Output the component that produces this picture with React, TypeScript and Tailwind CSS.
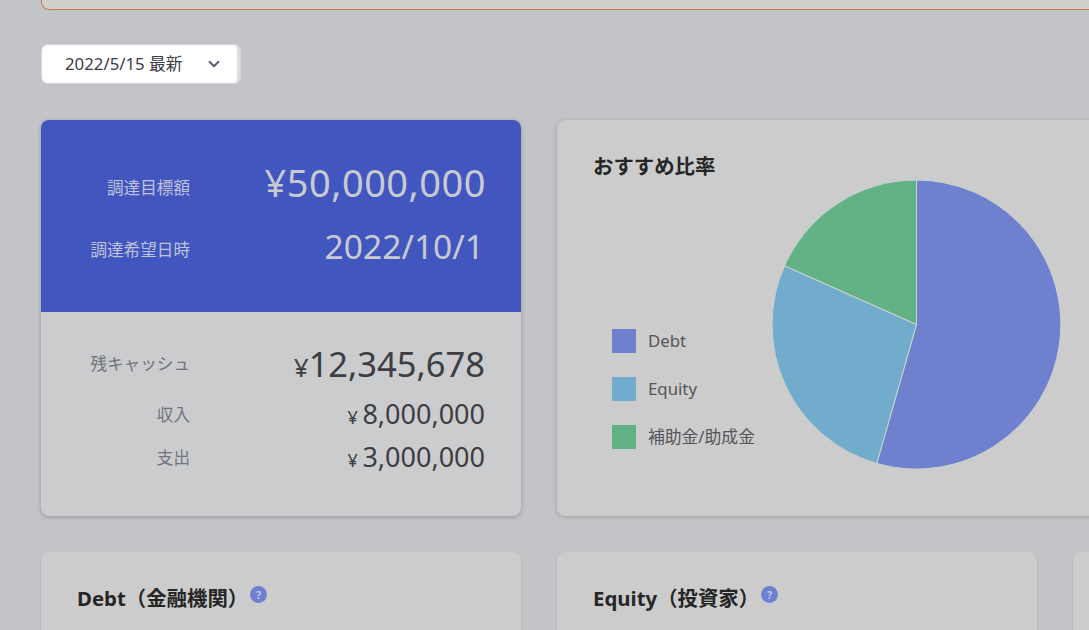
import { ChevronDown } from "lucide-react";

const sans = "font-['Noto_Sans','Noto_Sans_CJK_JP',sans-serif]";
const num = "font-['Noto_Sans','Noto_Sans_CJK_JP',sans-serif]";

const legend = [
  { label: "Debt", color: "bg-[#6f80ce]" },
  { label: "Equity", color: "bg-[#72accd]" },
  { label: "補助金/助成金", color: "bg-[#62b286]" },
];

// pie slices, coordinates in a 288 box, center 144
const slices = [
  { d: "M144 144 L144 0 A144 144 0 1 1 104.4 282.5 Z", fill: "#6f80ce" },
  { d: "M144 144 L104.4 282.5 A144 144 0 0 1 12.5 85.5 Z", fill: "#72accd" },
  { d: "M144 144 L12.5 85.5 A144 144 0 0 1 144 0 Z", fill: "#62b286" },
];

function HelpDot() {
  return (
    <span className="mt-[-7px] ml-[2px] flex h-[17px] w-[17px] items-center justify-center rounded-full bg-[#6f80d2] text-[11px] leading-none font-bold text-[#c5cbe6]">
      ?
    </span>
  );
}

function SmallCard({ title }: { title?: string }) {
  return (
    <div className="h-[120px] w-[480px] shrink-0 rounded-lg bg-[#cccccc] pt-[32px] pl-[36px] shadow-sm">
      {title && (
        <div className="flex items-center">
          <h3 className="text-[20.4px] leading-[28px] font-bold text-[#262626]">{title}</h3>
          <HelpDot />
        </div>
      )}
    </div>
  );
}

export default function App() {
  return (
    <div className={`${sans} h-[630px] w-[1089px] overflow-hidden bg-[#c3c4c8] pl-[41px]`}>
      {/* top banner, cut off by the window */}
      <div className="h-[10px] w-[1100px] rounded-b-lg border-x border-b border-[#c8794a] bg-[#cfcfcc]" />

      {/* date select */}
      <div className="mt-[35px] ml-[1px] flex h-[38px] w-[198px] items-center justify-between rounded-md border-r-[3px] border-[#dcdde0] bg-white pr-[14px] pl-[23px] shadow-[0_0_0_1px_#d5d6da]">
        <span className="text-[16.8px] text-[#3b3b45]">2022/5/15 最新</span>
        <ChevronDown className="h-[18px] w-[18px] text-[#555a78]" strokeWidth={2.5} />
      </div>

      <div className="mt-[37px] flex gap-[36px]">
        {/* summary card */}
        <div className="h-[396px] w-[480px] shrink-0 overflow-hidden rounded-lg bg-[#cbcccd] shadow-[0_1px_4px_rgba(0,0,0,0.25)]">
          <div className="h-[192px] bg-[#4256c0] pt-[39px] pr-[35px] text-[#c9cad0]">
            <div className="flex h-[46px] items-center justify-between">
              <span className="w-[149px] pt-[12px] text-right text-[16.6px] text-[#bfc3d8]">調達目標額</span>
              <span className={`${num} text-[38px] tracking-[0.5px]`}>¥50,000,000</span>
            </div>
            <div className="mt-[18px] flex h-[46px] items-center justify-between">
              <span className="w-[149px] pt-[8px] text-right text-[16.6px] text-[#bfc3d8]">調達希望日時</span>
              <span className={`${num} pr-[2px] text-[33.6px]`}>2022/10/1</span>
            </div>
          </div>
          <div className="pt-[32px] pr-[36px] text-[#3d3d42]">
            <div className="flex h-[40px] items-center justify-between">
              <span className="w-[149px] text-right text-[16.6px] text-[#72727e]">残キャッシュ</span>
              <span className={`${num} text-[34.5px]`}><span className="text-[26px]">¥</span>12,345,678</span>
            </div>
            <div className="mt-[14px] flex h-[32px] items-center justify-between">
              <span className="w-[149px] pt-[2px] text-right text-[16.6px] text-[#72727e]">収入</span>
              <span className={`${num} text-[27px]`}><span className="text-[18px]">¥ </span>8,000,000</span>
            </div>
            <div className="mt-[11px] flex h-[32px] items-center justify-between">
              <span className="w-[149px] pt-[3px] text-right text-[16.6px] text-[#72727e]">支出</span>
              <span className={`${num} text-[27px]`}><span className="text-[18px]">¥ </span>3,000,000</span>
            </div>
          </div>
        </div>

        {/* recommended ratio */}
        <div className="flex h-[396px] w-[900px] shrink-0 rounded-lg bg-[#cccccc] pt-[32px] pl-[36px] shadow-[0_1px_4px_rgba(0,0,0,0.2)]">
          <div className="flex h-[297px] w-[179px] flex-col justify-between">
            <h3 className="text-[20.4px] leading-[28px] font-bold text-[#262626]">おすすめ比率</h3>
            <ul className="flex flex-col gap-[24px] pl-[19px]">
              {legend.map((item) => (
                <li key={item.label} className="flex items-center gap-[12px]">
                  <span className={`h-[24px] w-[24px] ${item.color}`} />
                  <span className="text-[16.8px] leading-[24px] text-[#55555a]">{item.label}</span>
                </li>
              ))}
            </ul>
          </div>
          <svg viewBox="0 0 288 288" className="mt-[28px] h-[289px] w-[289px]">
            {slices.map((s) => (
              <path key={s.fill} d={s.d} fill={s.fill} stroke="#c6d0cc" strokeWidth="1" />
            ))}
          </svg>
        </div>
      </div>

      <div className="mt-[36px] flex gap-[36px]">
        <SmallCard title="Debt（金融機関）" />
        <SmallCard title="Equity（投資家）" />
        <SmallCard />
      </div>
    </div>
  );
}
